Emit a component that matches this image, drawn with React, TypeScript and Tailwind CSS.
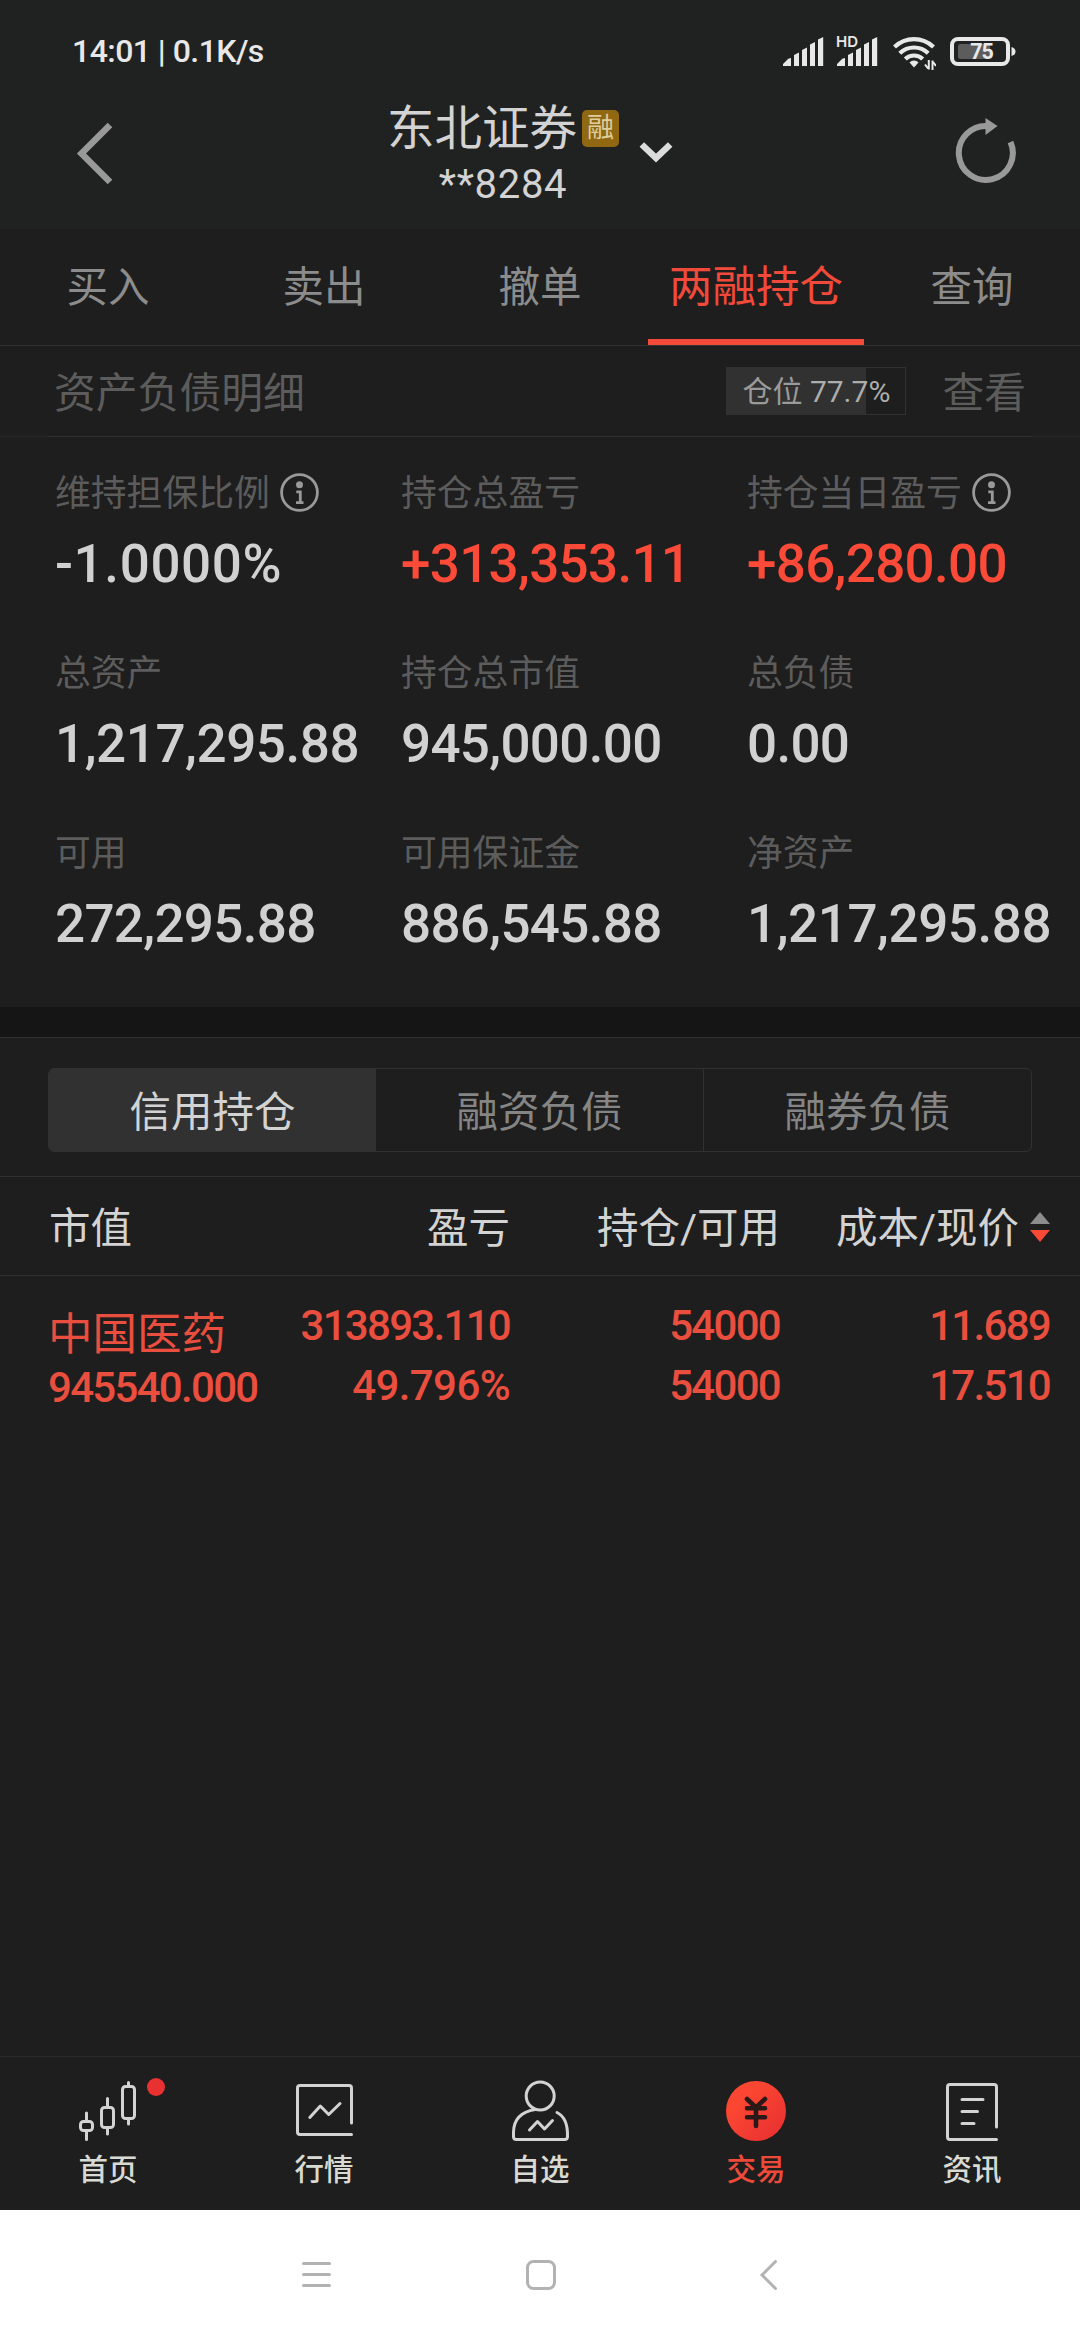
import type { ReactNode } from 'react';
import clsx from 'clsx';

type Stat = { label: string; value: string; up?: boolean; info?: boolean };

const TABS = ['买入', '卖出', '撤单', '两融持仓', '查询'];

const STATS: Stat[] = [
  { label: '维持担保比例', value: '-1.0000%', info: true },
  { label: '持仓总盈亏', value: '+313,353.11', up: true },
  { label: '持仓当日盈亏', value: '+86,280.00', up: true, info: true },
  { label: '总资产', value: '1,217,295.88' },
  { label: '持仓总市值', value: '945,000.00' },
  { label: '总负债', value: '0.00' },
  { label: '可用', value: '272,295.88' },
  { label: '可用保证金', value: '886,545.88' },
  { label: '净资产', value: '1,217,295.88' },
];

const SEGMENTS = ['信用持仓', '融资负债', '融券负债'];

const POSITION = 77.7;

function Signal() {
  return (
    <svg width="41" height="29" viewBox="0 0 41 29" fill="#e8e8e8">
      <path d="M0 29v-2l5-5q3-1.500 3-.5V29zM11 29V18l5-2.500V29zM19 29V13l5-2.500V29zM27 29V7.500l5-2.500V29zM35 29V2.500L40.200 0V29z" />
    </svg>
  );
}

function StatusBar() {
  return (
    <div className="flex h-[102px] items-center pl-[72px] pr-[64px]">
      <span className="-mt-px whitespace-pre text-[32px] font-medium tracking-[-0.55px] text-[#e8e8e8]">14:01 | 0.1K/s</span>
      <div className="ml-auto flex items-center">
        <Signal />
        <div className="relative ml-[13px]">
          <Signal />
          <span className="absolute -left-px -top-[3px] font-['Inter'] text-[15px] font-semibold leading-[16px] text-[#e8e8e8]">HD</span>
        </div>
        <svg className="ml-[15px] mt-[3px]" width="43" height="34" viewBox="0 0 43 34" fill="none" stroke="#e8e8e8" strokeWidth="4.200">
          <path d="M1.500 11a28 28 0 0 1 39 0M6.800 17.200a20.500 20.500 0 0 1 28.400 0M12.300 23a12.500 12.500 0 0 1 17.400 0" />
          <path d="M16.500 26.500a6 6 0 0 1 9 0L21 31.500z" fill="#e8e8e8" stroke="none" />
          <path d="M35.800 24v9.500M32 28.500l3 3.800M39.500 34v-9.500M43 30l-3-4" strokeWidth="2" />
        </svg>
        <svg className="ml-[14px]" width="66" height="29" viewBox="0 0 66 29">
          <rect x="2" y="2" width="56" height="25" rx="6" fill="none" stroke="#e8e8e8" strokeWidth="4" />
          <rect x="8" y="7" width="32" height="15" rx="2.500" fill="#5c5c5c" />
          <path d="M61.500 10q4 1 4 4.500t-4 4.500z" fill="#e8e8e8" />
          <text x="31.500" y="22.200" textAnchor="middle" fill="#e8e8e8" fontFamily="Roboto" fontSize="21.500" fontWeight="700" letterSpacing="-1">75</text>
        </svg>
      </div>
    </div>
  );
}

function Header() {
  return (
    <div className="flex h-[127px]">
      <svg className="ml-[76px] mt-5" width="38" height="64" viewBox="0 0 38 64" fill="none" stroke="#999" strokeWidth="6.500">
        <path d="M34 3L5.500 31.500 34 60" />
      </svg>
      <div className="relative ml-[273px] flex flex-col items-center">
        <div className="-mt-[2px] flex h-[58px] items-center">
          <span className="text-[47.500px] leading-[58px] text-[#d3d3d3]">东北证券</span>
          <span className="-mt-px ml-[5px] flex h-[37px] w-[37px] items-center justify-center rounded-[5px] bg-[#916812] text-[27px] leading-[37px] text-[#dfcfa0]">融</span>
        </div>
        <span className="mt-[3px] text-[40px] leading-[48px] tracking-[0.7px] text-[#d3d3d3]">**8284</span>
        <svg className="absolute -right-[54px] top-[39px]" width="34" height="22" viewBox="0 0 34 22" fill="none" stroke="#dcdcdc" strokeWidth="6.500">
          <path d="M2.800 3.500L17 17 31.200 3.500" />
        </svg>
      </div>
      <svg className="ml-auto mr-[63px] mt-4" width="62" height="66" viewBox="0 0 62 66" fill="none">
        <path d="M33 8a27 27 0 1 0 22.500 16" stroke="#999" strokeWidth="6" />
        <path d="M30.500 0L42.500 8 30.500 17z" fill="#999" />
      </svg>
    </div>
  );
}

function InfoIcon() {
  return (
    <svg className="-mt-px ml-[10px]" width="39" height="39" viewBox="0 0 39 39" fill="none" stroke="#999">
      <circle cx="19.500" cy="19.500" r="17.900" strokeWidth="2.800" />
      <circle cx="19.500" cy="11.700" r="3.500" fill="#999" stroke="none" />
      <path d="M16.300 18.800h4v11M16 29.600h7.500" strokeWidth="2.800" />
    </svg>
  );
}

function Cell({ top, bottom }: { top: string; bottom: string }) {
  return (
    <div className="flex flex-col text-right text-[42px] font-medium leading-[60px] tracking-[-1.700px]">
      <span>{top}</span>
      <span className={clsx(bottom.endsWith('%') && 'tracking-[-0.6px]')}>{bottom}</span>
    </div>
  );
}

function NavItem({ label, active, dot, children }: { label: string; active?: boolean; dot?: boolean; children: ReactNode }) {
  return (
    <div className="relative flex w-[216px] flex-col items-center pt-[22px]">
      <svg width="64" height="64" viewBox="0 0 64 64" fill="none" stroke="#d3d3d3" strokeWidth="3" strokeLinecap="round" strokeLinejoin="round">
        {children}
      </svg>
      {dot && <span className="absolute left-[147px] top-[21px] h-[18px] w-[18px] rounded-full bg-[#e93131]" />}
      <span className={clsx('mt-[6px] text-[29.500px] font-medium leading-[42px]', active ? 'text-[#ee4a3a]' : 'text-[#dadad4]')}>{label}</span>
    </div>
  );
}

function BottomNav() {
  return (
    <div className="flex h-[154px] border-t border-[#2a2a2a]">
      <NavItem label="首页" dot>
        <rect x="4.500" y="42.500" width="12" height="9" rx="3" />
        <path d="M10.500 34v8M10.500 52v8.500" />
        <rect x="25.500" y="28.500" width="12" height="20" rx="3" />
        <path d="M31.500 19.500v8.500M31.500 49v6" />
        <rect x="46.500" y="7.500" width="12" height="32" rx="3" />
        <path d="M52.500 3.500V7M52.500 40v5" />
      </NavItem>
      <NavItem label="行情">
        <path d="M59.500 44V9q0-2.500-2.500-2.500H8q-2.500 0-2.500 2.500v44q0 2.500 2.500 2.500h51.500" />
        <path d="M17.800 38.500L28.300 27l8.400 8.500L48 24.500" />
      </NavItem>
      <NavItem label="自选">
        <circle cx="32.200" cy="17" r="14" />
        <path d="M27 30.500Q6 34 5.500 53v4.500q0 3 3 3h48q3 0 3-3Q60 39 49 33.500" />
        <path d="M21.500 51l8-8.500 7 7.500 8-8.500" />
      </NavItem>
      <NavItem label="交易" active>
        <defs>
          <linearGradient id="trade" x1="0" y1="0" x2="1" y2="1">
            <stop offset="0.300" stopColor="#fb4632" />
            <stop offset="1" stopColor="#e62e31" />
          </linearGradient>
        </defs>
        <circle cx="32" cy="32" r="30" fill="url(#trade)" stroke="none" />
        <path d="M23 20l9 8.500 9-8.500M23 29.200h18M23 38.300h18M32 29v18" stroke="#2b1817" strokeWidth="4.600" />
      </NavItem>
      <NavItem label="资讯">
        <path d="M56.500 48V8q0-2.500-2.500-2.500H10Q7.500 5.500 7.500 8v50q0 2.500 2.500 2.500h46.500" />
        <path d="M22 20.500h21M22 32.500h15.500M22 44.500h12" />
      </NavItem>
    </div>
  );
}

function SystemNav() {
  return (
    <div className="flex h-[130px] items-center bg-white pl-[301px]">
      <svg width="31" height="32" viewBox="0 0 31 32" fill="none" stroke="#b2b2b2" strokeWidth="3" strokeLinecap="round">
        <path d="M2.500 4.500h26M2.500 15.500h26M2.500 26.500h26" />
      </svg>
      <svg className="ml-[193px]" width="32" height="32" viewBox="0 0 32 32" fill="none" stroke="#b2b2b2" strokeWidth="3">
        <rect x="2.500" y="2.500" width="27" height="27" rx="6" />
      </svg>
      <svg className="ml-[201px]" width="20" height="32" viewBox="0 0 20 32" fill="none" stroke="#b2b2b2" strokeWidth="3" strokeLinecap="round">
        <path d="M17.500 2.500L4 16l13.500 13.500" />
      </svg>
    </div>
  );
}

export default function App() {
  return (
    <div className="flex h-[2340px] w-[1080px] flex-col overflow-hidden bg-[#1e1e1e] font-['Roboto','Noto_Sans_CJK_SC',sans-serif] text-[#d3d3d3]">
      <div className="bg-[#202221]">
        <StatusBar />
        <Header />
      </div>

      <div className="flex h-[117px] border-b border-[#313131]">
        {TABS.map((tab) => {
          const active = tab === '两融持仓';
          return (
            <div key={tab} className={clsx('flex w-[216px] items-center justify-center pt-[8px]', active ? 'border-b-[6px] border-[#f44a39] text-[43.500px] text-[#f24a3a]' : 'pb-[6px] text-[41.500px] text-[#8c8c8c]')}>
              {tab}
            </div>
          );
        })}
      </div>

      {/* 资产负债明细 */}
      <div className="flex h-[90px] items-center pl-[54px] pr-[54px] text-[41.800px] text-[#5c5c5c]">
        <span className="mt-[7px]">资产负债明细</span>
        <div className="relative ml-auto flex h-12 w-[180px] items-center justify-center border border-[#313131]">
          <div className="absolute inset-y-0 left-0 bg-[#313131]" style={{ width: `${POSITION}%` }} />
          <span className="relative text-[30px] text-[#9a9a9a]">
            仓位 <span className="text-[#adadad]">{POSITION}%</span>
          </span>
        </div>
        <span className="ml-[36px] mt-[7px]">查看</span>
      </div>
      <div className="h-px shrink-0 bg-[#262626] px-12">
        <div className="h-px bg-[#303030]" />
      </div>

      <div className="grid h-[570px] grid-cols-[346px_346px_333px] content-start gap-y-[33px] pl-[55px] pt-[32px]">
        {STATS.map((s) => (
          <div key={s.label} className="h-[147px]">
            <div className="flex h-[48px] items-center text-[35.800px] leading-[48px] text-[#5c5c5c]">
              <span className="mt-[2px]">{s.label}</span>
              {s.info && <InfoIcon />}
            </div>
            <div
              className={clsx(
                'mt-[17px] whitespace-nowrap text-[53px] font-medium leading-[60px]',
                s.value.endsWith('%') ? 'tracking-[0.6px]' : s.value.length > 11 ? 'tracking-[-0.450px]' : 'tracking-[-0.700px]',
                s.up ? 'text-[#fb4a38]' : 'text-[#d1d1d1]',
              )}
            >
              {s.value}
            </div>
          </div>
        ))}
      </div>

      <div className="h-[31px] shrink-0 border-b border-[#313131] bg-[#151515]" />

      <div className="flex h-[139px] items-start justify-center border-b border-[#313131] pt-[30px]">
        <div className="flex h-[84px] w-[984px] overflow-hidden rounded-[6px] border border-[#313131]">
          {SEGMENTS.map((seg, i) => (
            <div key={seg} className={clsx('flex flex-1 items-center justify-center pt-[6px] text-[41.500px]', i === 0 ? 'bg-[#313131] text-[#d3d3d3]' : 'text-[#858585]', i === 2 && 'border-l border-[#313131]')}>
              {seg}
            </div>
          ))}
        </div>
      </div>

      <div className="grid h-[99px] grid-cols-[191px_270px_270px_270px] items-center border-b border-[#313131] pl-[49px] pt-[7px] text-[41.500px]">
        <span>市值</span>
        <span className="text-right">盈亏</span>
        <span className="text-right">持仓/可用</span>
        <div className="flex items-center justify-end">
          <span className="whitespace-nowrap">成本/现价</span>
          <svg className="-mt-[5px] ml-[11px]" width="20" height="30" viewBox="0 0 20 30">
            <path d="M0 12L10 0l10 12z" fill="#8c8c8c" />
            <path d="M0 18h20L10 30z" fill="#f94a38" />
          </svg>
        </div>
      </div>

      <div className="grid flex-1 grid-cols-[192px_270px_270px_270px] content-start pl-[48px] pt-[20px] text-[#ea4e3e]">
        <div className="whitespace-nowrap">
          <div className="mt-[9px] text-[44.500px] leading-[60px]">中国医药</div>
          <div className="-mt-[7px] text-[42px] font-medium leading-[60px] tracking-[-1.700px]">945540.000</div>
        </div>
        <Cell top="313893.110" bottom="49.796%" />
        <Cell top="54000" bottom="54000" />
        <Cell top="11.689" bottom="17.510" />
      </div>

      <BottomNav />
      <SystemNav />
    </div>
  );
}
